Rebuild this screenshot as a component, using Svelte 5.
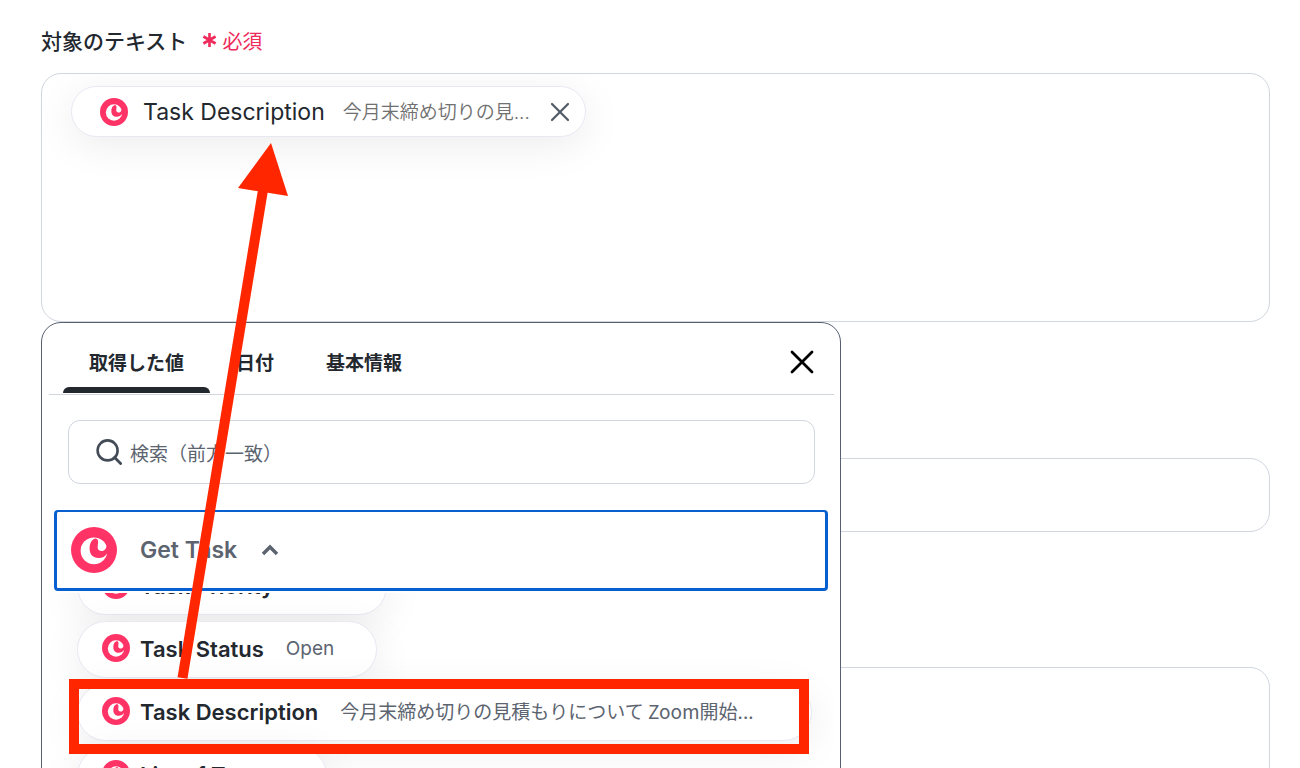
<script lang="ts">
  type Output = { name: string; value: string };

  const outputs: Output[] = [
    { name: "Task Priority", value: "None" },
    { name: "Task Status", value: "Open" },
    { name: "Task Description", value: "今月末締め切りの見積もりについて Zoom開始..." },
    { name: "List of Tags", value: "" },
  ];

  const tabs = ["取得した値", "日付", "基本情報"];

  let activeTab = $state(0);
  let query = $state("");
  let groupOpen = $state(true);
  let pickerOpen = $state(true);
  let chips = $state([{ name: "Task Description", value: "今月末締め切りの見..." }]);

  let shown = $derived(outputs.filter((o) => o.name.startsWith(query)));

  function removeChip(i: number) {
    chips.splice(i, 1);
  }

  function addChip(o: Output) {
    chips.push({ name: o.name, value: o.value });
  }
</script>

{#snippet logo()}
  <svg class="logo" viewBox="0 0 46 46" aria-hidden="true">
    <circle cx="23" cy="23" r="23" fill="#ff3366" />
    <circle cx="23" cy="23.8" r="13.4" fill="#fff" />
    <path
      d="M24.4 11.6C20 12.8 18.6 17.5 18.6 21.5C18.6 27.5 22 31 27.5 31C31.4 31 34.2 29.4 36 26.4L38 26V19L35.6 18.4C35.4 22 33 24 30.4 24C27.4 24 26.2 21.8 26.8 18.6C27.4 15.2 27.6 12.2 24.4 11.6Z"
      fill="#ff3366"
    />
  </svg>
{/snippet}

<main class="page">
  <section class="field">
    <div class="label-row">
      <span class="label" id="target-label">対象のテキスト</span>
      <span class="required">
        <svg width="15" height="16" viewBox="0 0 15 16" aria-hidden="true">
          <path d="M7.5 1v14M1.4 4.5l12.2 7M13.6 4.5l-12.2 7" stroke="currentColor" stroke-width="2.6" />
        </svg>
        必須
      </span>
    </div>

    <div class="anchor">
      <div class="box tall" role="group" aria-labelledby="target-label">
        {#each chips as chip, i}
          <div class="chip">
            {@render logo()}
            <span class="chip-name">{chip.name}</span>
            <span class="chip-value">{chip.value}</span>
            <button type="button" class="remove" aria-label="削除" onclick={() => removeChip(i)}>
              <svg width="20" height="20" viewBox="0 0 20 20">
                <path d="M2 2l16 16M18 2L2 18" stroke="#4f5966" stroke-width="2.2" stroke-linecap="round" />
              </svg>
            </button>
          </div>
        {/each}
      </div>

      {#if pickerOpen}
        <div class="picker">
          <div class="tabs">
            {#each tabs as tab, i}
              <button type="button" class="tab" class:active={activeTab === i} onclick={() => (activeTab = i)}>
                <span>{tab}</span>
              </button>
            {/each}
            <button type="button" class="close" aria-label="閉じる" onclick={() => (pickerOpen = false)}>
              <svg width="24" height="24" viewBox="0 0 24 24">
                <path d="M2 2l20 20M22 2L2 22" stroke="#000" stroke-width="2.8" stroke-linecap="round" />
              </svg>
            </button>
          </div>

          <label class="search">
            <svg width="26" height="26" viewBox="0 0 26 26" aria-hidden="true">
              <circle cx="11.6" cy="11.4" r="10" fill="none" stroke="#434b57" stroke-width="2.6" />
              <path d="M18.6 18.6l6 6" stroke="#434b57" stroke-width="2.8" stroke-linecap="round" />
            </svg>
            <input type="text" placeholder="検索（前方一致）" aria-label="検索（前方一致）" bind:value={query} />
          </label>

          <button type="button" class="group" aria-expanded={groupOpen} onclick={() => (groupOpen = !groupOpen)}>
            {@render logo()}
            <span>Get Task</span>
            <svg class="chevron" class:closed={!groupOpen} width="18" height="12" viewBox="0 0 18 12" aria-hidden="true">
              <path d="M2 10l7-7 7 7" fill="none" stroke="#5c6470" stroke-width="3.4" />
            </svg>
          </button>

          {#if groupOpen}
            <div class="scroller">
              <ul>
                {#each shown as o}
                  <li>
                    <button type="button" class="output" onclick={() => addChip(o)}>
                      {@render logo()}
                      <span class="output-name">{o.name}</span>
                      <span class="output-value" class:long={o.value.length > 20}>{o.value}</span>
                    </button>
                  </li>
                {/each}
              </ul>
            </div>
          {/if}
        </div>
      {/if}
    </div>
  </section>

  <input class="box line" type="text" aria-label="テキスト" />
  <textarea class="box area" aria-label="メモ"></textarea>

  <!-- tutorial annotation -->
  <svg class="annotation" width="820" height="768" viewBox="0 0 820 768" aria-hidden="true">
    <rect x="74" y="684" width="730" height="65" fill="none" stroke="#ff2600" stroke-width="10" />
    <path d="M182.5 678L263 190" stroke="#ff2600" stroke-width="10" />
    <path d="M271 143L238 188L288 196Z" fill="#ff2600" />
  </svg>
</main>

<style>
  :global(body) {
    background: #fff;
  }

  .page {
    position: relative;
    box-sizing: border-box;
    height: 100vh;
    overflow: hidden;
    padding: 22px 30px 0 41px;
    font-family: Inter, "Noto Sans CJK JP", sans-serif;
    color: #23282f;
  }

  button,
  input,
  textarea {
    font-family: inherit;
    color: inherit;
  }

  button {
    border: 0;
    background: none;
    padding: 0;
    cursor: pointer;
  }

  svg {
    display: block;
    flex: none;
  }

  .label-row {
    display: flex;
    align-items: center;
    gap: 15px;
    height: 36px;
    margin-bottom: 15px;
  }

  .label {
    font-size: 21px;
    font-weight: 500;
  }

  .required {
    display: flex;
    align-items: center;
    gap: 5px;
    font-size: 20px;
    color: #ee2b5b;
  }

  .anchor {
    position: relative;
  }

  .box {
    display: block;
    box-sizing: border-box;
    width: 100%;
    border: 1px solid #d0d5de;
    border-radius: 20px;
    background: #fff;
  }

  .tall {
    height: 249px;
    padding: 12px 29px;
    overflow: hidden;
  }

  .line {
    height: 74px;
    margin-top: 136px;
    padding: 0 24px;
  }

  .area {
    height: 249px;
    margin-top: 135px;
    padding: 24px;
    resize: none;
  }

  .chip {
    display: inline-flex;
    align-items: center;
    box-sizing: border-box;
    height: 51px;
    padding: 0 15px 0 28px;
    border: 1px solid #e6e9f2;
    border-radius: 26px;
    background: #fff;
    box-shadow: 0 8px 40px rgba(0, 0, 0, 0.08);
  }

  .logo {
    width: 28px;
    height: 28px;
  }

  .chip-name {
    margin-left: 15px;
    font-size: 23px;
  }

  .chip-value {
    margin: 0 20px 3px 18px;
    font-size: 19px;
    font-weight: 350;
    color: #707070;
  }

  .picker {
    position: absolute;
    z-index: 1;
    top: 100%;
    left: 0;
    box-sizing: border-box;
    width: 800px;
    height: 560px;
    padding: 0 6px 0 7px;
    border: 1px solid #566070;
    border-radius: 20px;
    background: #fff;
  }

  .tabs {
    display: flex;
    height: 71px;
    padding: 0 14px;
    border-bottom: 1px solid #d0d5de;
  }

  .tab {
    display: flex;
    flex-direction: column;
    height: 70px;
    font-size: 19px;
    font-weight: 700;
  }

  .tab span {
    flex: 1;
    padding: 27px 26px 0;
    line-height: 28px;
  }

  .tab.active::after {
    content: "";
    align-self: stretch;
    height: 6px;
    border-radius: 6px 6px 0 0;
    background: #23282f;
  }

  .close {
    margin-left: auto;
    padding: 6px 6px 0;
  }

  .search {
    display: flex;
    align-items: center;
    gap: 8px;
    box-sizing: border-box;
    height: 64px;
    margin: 25px 19px 26px;
    padding: 0 27px;
    border: 1px solid #d0d5de;
    border-radius: 12px;
  }

  .search input {
    flex: 1;
    min-width: 0;
    padding: 4px 0 0;
    border: 0;
    outline: 0;
    background: none;
    font-size: 19px;
  }

  .search input::placeholder {
    color: #5c6470;
    opacity: 1;
  }

  .group {
    position: relative;
    z-index: 1;
    display: flex;
    align-items: center;
    box-sizing: border-box;
    width: calc(100% - 11px);
    height: 81px;
    margin: 0 5px 2px;
    padding: 0 14px;
    border: 3px solid #0860d0;
    border-top-width: 2px;
    border-radius: 4px;
    background: #fff;
    font-size: 23px;
    font-weight: 600;
    color: #5c6470;
  }

  .group .logo {
    width: 46px;
    height: 46px;
    margin-right: 23px;
  }

  .chevron {
    margin-left: 24px;
  }

  .closed {
    transform: rotate(180deg);
  }

  .scroller {
    height: 240px;
    overflow: hidden;
  }

  ul {
    display: flex;
    flex-direction: column;
    align-items: flex-start;
    gap: 6px;
    margin: -35px 0 0;
    padding: 0 0 0 28px;
    list-style: none;
  }

  .output {
    display: flex;
    align-items: center;
    box-sizing: border-box;
    height: 57px;
    padding: 0 42px 2px 24px;
    border: 1px solid #e6e9f2;
    border-radius: 29px;
    background: #fff;
    box-shadow: 0 8px 40px rgba(0, 0, 0, 0.08);
    white-space: nowrap;
  }

  .output .logo {
    margin-bottom: 1px;
  }

  .output-name {
    margin: 0 22px 0 10px;
    font-size: 22px;
    font-weight: 600;
  }

  .output-value {
    font-size: 19px;
    color: #5c6470;
  }

  .long {
    min-width: 429px;
    margin-bottom: 2px;
    font-family: "Noto Sans CJK JP", sans-serif;
    text-align: left;
  }

  .annotation {
    position: absolute;
    z-index: 2;
    top: 0;
    left: 0;
    pointer-events: none;
  }
</style>
